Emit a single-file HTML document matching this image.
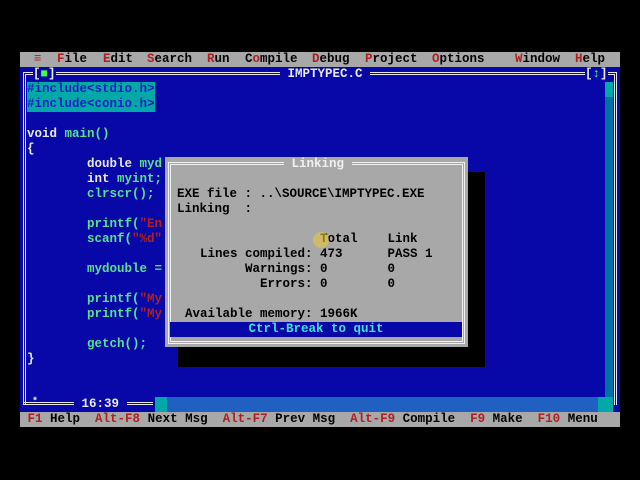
<!DOCTYPE html>
<html><head><meta charset="utf-8"><style>
body{margin:0;background:#000;width:640px;height:480px;overflow:hidden;position:relative;font-family:"Liberation Mono",monospace;font-size:12.5px;font-weight:bold}
.a{position:absolute;white-space:pre;line-height:15px;height:15px}
.w{color:#e8e8e8}.g{color:#58e090}.r{color:#b02020}.k{color:#000}.c{color:#40e0e0}
</style></head><body>
<div class="a" style="left:20px;top:52px;width:600px;background:#a8a8a8"></div>
<div class="a" style="left:20px;top:67px;width:600px;height:345px;background:#0808a8"></div>
<!-- frame -->
<div style="position:absolute;left:23px;top:72px;width:588px;height:330px;border:3px double #e8e8e8;border-bottom:none"></div>
<div style="position:absolute;left:23px;top:402px;width:130px;border-top:3px double #e8e8e8"></div>
<div class="a w" style="left:33px;top:67px;background:#0808a8">[<span style="color:#40ff40">■</span>]</div>
<div class="a w" style="left:280px;top:67px;background:#0808a8"> IMPTYPEC.C </div>
<div class="a w" style="left:585px;top:67px;background:#0808a8">[<span style="color:#40ff80">↕</span>]</div>
<div style="position:absolute;left:605px;top:82px;width:8px;height:315px;background:#0070a8"></div>
<div style="position:absolute;left:605px;top:82px;width:8px;height:15px;background:#00a8a8"></div>
<div style="position:absolute;left:155px;top:397px;width:450px;height:15px;background:#2060c0"></div>
<div style="position:absolute;left:155px;top:397px;width:12px;height:15px;background:#00a8a8"></div>
<div style="position:absolute;left:598px;top:397px;width:15px;height:15px;background:#00a8a8"></div>
<div class="a w" style="left:74px;top:397px;background:#0808a8"> 16:39 </div>
<div class="a w" style="left:32px;top:395px;font-size:10px">*</div>
<!-- menu -->
<div class="a k" style="left:34px;top:52px"><span class="r">≡</span></div>
<div class="a k" style="left:57px;top:52px"><span class="r">F</span>ile</div>
<div class="a k" style="left:103px;top:52px"><span class="r">E</span>dit</div>
<div class="a k" style="left:147px;top:52px"><span class="r">S</span>earch</div>
<div class="a k" style="left:207px;top:52px"><span class="r">R</span>un</div>
<div class="a k" style="left:245px;top:52px">C<span class="r">o</span>mpile</div>
<div class="a k" style="left:312px;top:52px"><span class="r">D</span>ebug</div>
<div class="a k" style="left:365px;top:52px"><span class="r">P</span>roject</div>
<div class="a k" style="left:432px;top:52px"><span class="r">O</span>ptions</div>
<div class="a k" style="left:515px;top:52px"><span class="r">W</span>indow</div>
<div class="a k" style="left:575px;top:52px"><span class="r">H</span>elp</div>
<!-- code -->
<div class="a g" style="left:27px;top:82px;background:#00a8a8;color:#2020c0">#include&lt;stdio.h&gt;</div>
<div class="a g" style="left:27px;top:97px;background:#00a8a8;color:#2020c0">#include&lt;conio.h&gt;</div>
<div class="a" style="left:27px;top:127px"><span class="w">void</span> <span class="g">main()</span></div>
<div class="a w" style="left:27px;top:142px">{</div>
<div class="a" style="left:87px;top:157px"><span class="w">double</span> <span class="g">myd</span></div>
<div class="a" style="left:87px;top:172px"><span class="w">int</span> <span class="g">myint;</span></div>
<div class="a g" style="left:87px;top:187px">clrscr();</div>
<div class="a g" style="left:87px;top:217px">printf(<span class="r">"En</span></div>
<div class="a g" style="left:87px;top:232px">scanf(<span class="r">"%d"</span></div>
<div class="a g" style="left:87px;top:262px">mydouble =</div>
<div class="a g" style="left:87px;top:292px">printf(<span class="r">"My</span></div>
<div class="a g" style="left:87px;top:307px">printf(<span class="r">"My</span></div>
<div class="a g" style="left:87px;top:337px">getch();</div>
<div class="a w" style="left:27px;top:352px">}</div>
<!-- dialog -->
<div style="position:absolute;left:178px;top:172px;width:307px;height:195px;background:#000"></div>
<div style="position:absolute;left:165px;top:157px;width:303px;height:190px;background:#a8a8a8"></div>
<div style="position:absolute;left:168px;top:162px;width:291px;height:176px;border:3px double #f0f0f0"></div>
<div class="a" style="left:284px;top:157px;background:#a8a8a8;color:#f0f0f0"> Linking </div>
<div class="a k" style="left:177px;top:187px">EXE file : ..\SOURCE\IMPTYPEC.EXE</div>
<div class="a k" style="left:177px;top:202px">Linking  :</div>
<div class="a k" style="left:320px;top:232px">Total    Link</div>
<div class="a k" style="left:200px;top:247px">Lines compiled: 473      PASS 1</div>
<div class="a k" style="left:245px;top:262px">Warnings: 0        0</div>
<div class="a k" style="left:260px;top:277px">Errors: 0        0</div>
<div class="a k" style="left:185px;top:307px">Available memory: 1966K</div>
<div class="a c" style="left:170px;top:322px;width:292px;background:#0808a8;text-align:center">Ctrl-Break to quit</div>
<div style="position:absolute;left:313px;top:232px;width:16px;height:16px;border-radius:50%;background:rgba(230,200,60,.6)"></div>
<!-- status -->
<div class="a k" style="left:20px;top:412px;width:600px;background:#a8a8a8"> <span class="r">F1</span> Help  <span class="r">Alt-F8</span> Next Msg  <span class="r">Alt-F7</span> Prev Msg  <span class="r">Alt-F9</span> Compile  <span class="r">F9</span> Make  <span class="r">F10</span> Menu</div>
</body></html>
